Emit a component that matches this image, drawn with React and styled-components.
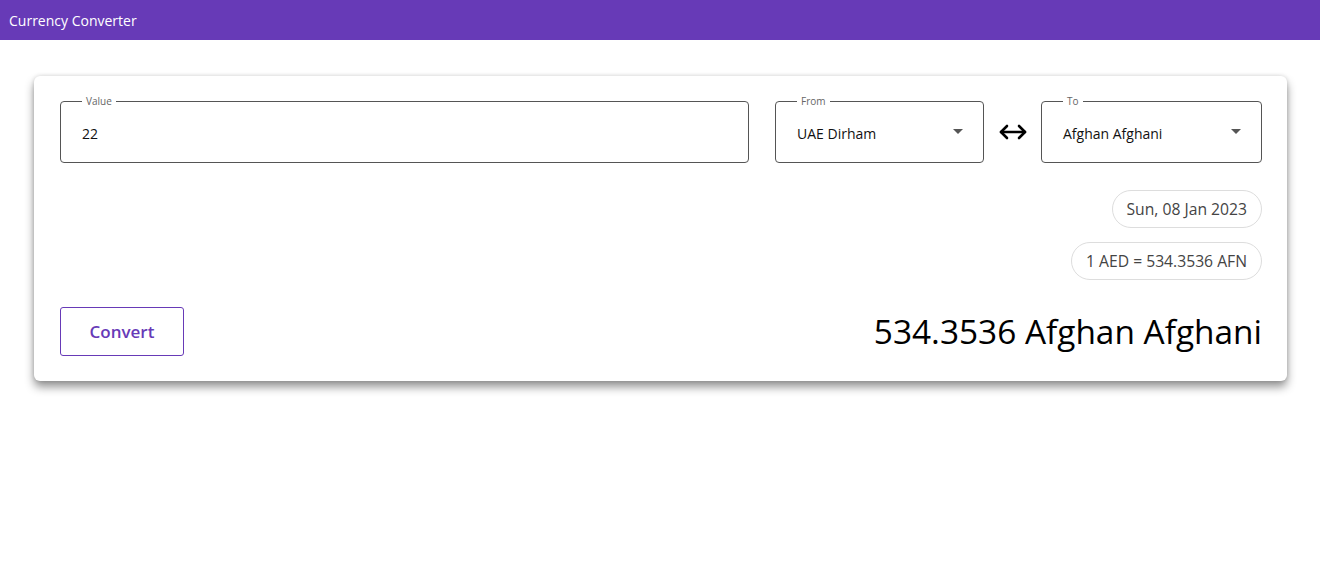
import React from "react";
import styled, { createGlobalStyle } from "styled-components";

const Global = createGlobalStyle`
  html, body { margin: 0; padding: 0; background: #fff; }
  body { font-family: "Open Sans", "Noto Sans", sans-serif; color: #000; }
  * { box-sizing: border-box; }
`;

const Header = styled.header`
  height: 40px;
  background: #673ab7;
  display: flex;
  align-items: center;
  padding: 0 9px;
  color: #fff;
  font-size: 14px;
`;

const Main = styled.main`
  padding: 36px 33px 40px 34px;
`;

const Card = styled.section`
  background: #fff;
  border-radius: 6px;
  box-shadow: 0 6px 10px rgba(0,0,0,0.42), 0 0 4px rgba(0,0,0,0.14);
  padding: 20px 25px 25px 26px;
  display: flex;
  flex-direction: column;
`;

const FieldsRow = styled.div`
  display: flex;
  align-items: flex-end;
`;

const Field = styled.fieldset`
  margin: 0;
  height: 67px;
  border: 1px solid #555;
  border-radius: 4px;
  padding: 0 21px;
  display: flex;
  align-items: center;
  justify-content: space-between;
  width: ${p => p.$w}px;
  flex: ${p => (p.$grow ? "1 1 auto" : "0 0 auto")};
`;

const Legend = styled.legend`
  font-size: 10px;
  color: #666;
  padding: 0 4px;
  line-height: 10px;
`;

const FieldText = styled.span`
  font-size: 14px;
  color: #111;
  margin-top: -2px;
`;

const Caret = styled.span`
  width: 0;
  height: 0;
  border-left: 5px solid transparent;
  border-right: 5px solid transparent;
  border-top: 5px solid #555;
  margin-right: -1px;
  margin-top: -6px;
`;

const Spacer = styled.div`
  width: 26px;
  flex: none;
`;

const SwapBox = styled.div`
  width: 57px;
  height: 62px;
  flex: none;
  display: flex;
  align-items: center;
  justify-content: center;
`;

const ChipsCol = styled.div`
  display: flex;
  flex-direction: column;
  align-items: flex-end;
  gap: 14px;
  margin-top: 27px;
`;

const Chip = styled.div`
  height: 38px;
  border: 1px solid #ddd;
  border-radius: 19px;
  padding: 0 14px;
  display: flex;
  align-items: center;
  font-size: 15.7px;
  color: #444;
`;

const BottomRow = styled.div`
  margin-top: 27px;
  display: flex;
  align-items: center;
  justify-content: space-between;
`;

const Button = styled.button`
  width: 124px;
  height: 49px;
  background: #fff;
  border: 1px solid #673ab7;
  border-radius: 3px;
  color: #673ab7;
  font-family: inherit;
  font-size: 17px;
  font-weight: 600;
  cursor: pointer;
`;

const Result = styled.div`
  font-size: 33.4px;
  color: #000;
  margin-top: -2px;
`;

const SwapIcon = () => (
  <svg width="30" height="18" viewBox="0 0 30 18" fill="none" stroke="#000" strokeWidth="2.6" strokeLinecap="round" strokeLinejoin="round">
    <path d="M3 9 H27" />
    <path d="M9 3 L3 9 L9 15" />
    <path d="M21 3 L27 9 L21 15" />
  </svg>
);

export default function App() {
  return (
    <>
      <Global />
      <Header>Currency Converter</Header>
      <Main>
        <Card>
          <FieldsRow>
            <Field $grow>
              <Legend>Value</Legend>
              <FieldText>22</FieldText>
            </Field>
            <Spacer />
            <Field $w={209}>
              <Legend>From</Legend>
              <FieldText>UAE Dirham</FieldText>
              <Caret />
            </Field>
            <SwapBox>
              <SwapIcon />
            </SwapBox>
            <Field $w={221}>
              <Legend>To</Legend>
              <FieldText>Afghan Afghani</FieldText>
              <Caret />
            </Field>
          </FieldsRow>
          <ChipsCol>
            <Chip>Sun, 08 Jan 2023</Chip>
            <Chip>1 AED = 534.3536 AFN</Chip>
          </ChipsCol>
          <BottomRow>
            <Button>Convert</Button>
            <Result>534.3536 Afghan Afghani</Result>
          </BottomRow>
        </Card>
      </Main>
    </>
  );
}
